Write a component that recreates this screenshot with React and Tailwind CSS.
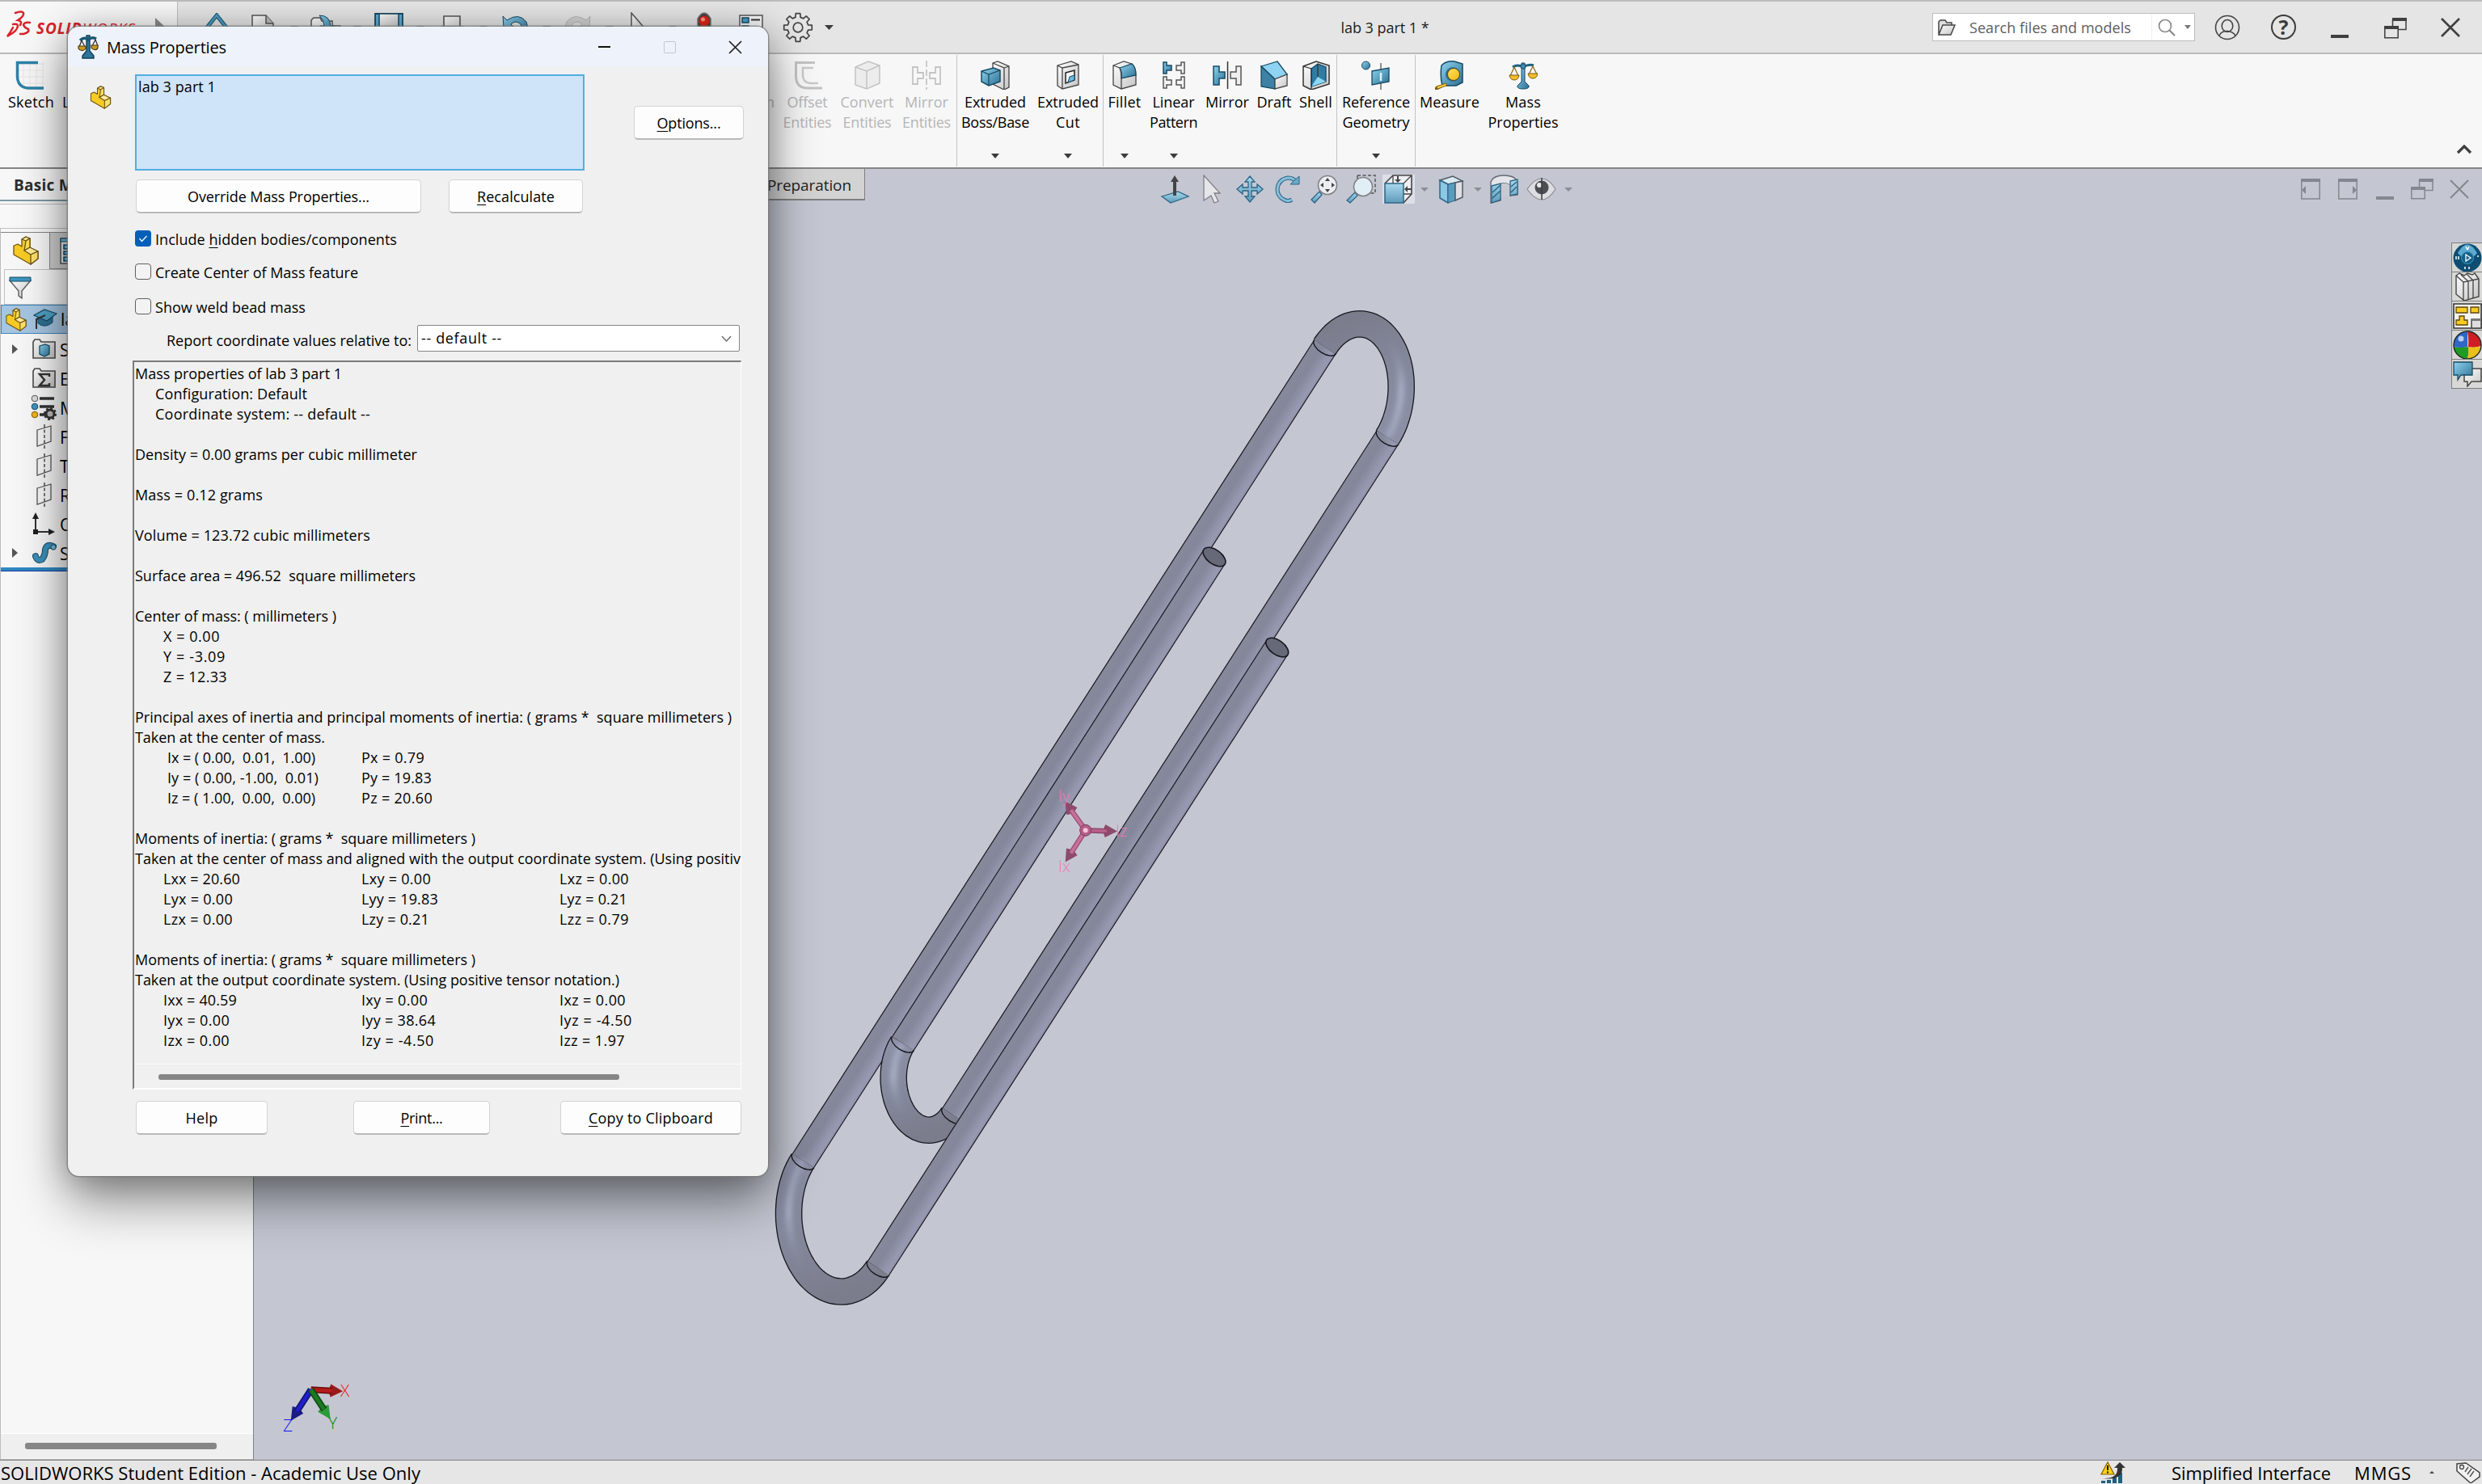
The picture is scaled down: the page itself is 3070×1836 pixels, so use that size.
import React, { useLayoutEffect, useRef } from "react";

/* Text that is tracked so that it takes exactly w pixels. */
function T({ w, className = "", children }) {
  const ref = useRef(null);
  useLayoutEffect(() => {
    const el = ref.current;
    if (!w || !el) return;
    el.style.letterSpacing = "0px";
    const natural = el.getBoundingClientRect().width;
    const n = el.textContent.length;
    el.style.letterSpacing = (w - natural) / n + "px";
  }, [w, children]);
  return (
    <span ref={ref} className={"inline-block whitespace-pre " + className}>
      {children}
    </span>
  );
}

const S = ({ w = 36, h = 36, className = "", children }) => (
  <svg width={w} height={h} viewBox={`0 0 ${w} ${h}`} fill="none" className={"block shrink-0 " + className}>
    {children}
  </svg>
);

const Caret = ({ c = "#3c3c3c", w = 10, h = 6 }) => (
  <S w={w} h={h}>
    <path d={`M0 0H${w}L${w / 2} ${h}Z`} fill={c} />
  </S>
);

function Defs() {
  return (
    <svg width="0" height="0" className="absolute">
      <defs>
        <linearGradient id="gb" x1="0" y1="0" x2="1" y2="1">
          <stop offset="0" stopColor="#8fd3f0" />
          <stop offset="1" stopColor="#2c6f93" />
        </linearGradient>
        <linearGradient id="gl" x1="0" y1="0" x2="0" y2="1">
          <stop offset="0" stopColor="#a9d9ee" />
          <stop offset="1" stopColor="#5f9bba" />
        </linearGradient>
        <linearGradient id="gw" x1="0" y1="0" x2="1" y2="1">
          <stop offset="0" stopColor="#ffffff" />
          <stop offset="1" stopColor="#c4c4c4" />
        </linearGradient>
        <linearGradient id="gy" x1="0" y1="0" x2="1" y2="1">
          <stop offset="0" stopColor="#ffe45c" />
          <stop offset="1" stopColor="#f2b50f" />
        </linearGradient>
      </defs>
    </svg>
  );
}

const DK = "#174a63";

const Part = ({ w = 32, h = 36 }) => (
  <svg width={w} height={h} viewBox="0 0 32 36" fill="none" className="block shrink-0">
    <g stroke="#6d5213" strokeWidth="1.3" strokeLinejoin="round">
      <path d="M1 12L6 10L11 13V4L16 1L21 3V14L24 16L31 19V28L22 35L1 23Z" fill="#f8cb24" />
      <path d="M11 4L16 1L21 3L16 6Z" fill="#fdea9a" />
      <path d="M16 6L21 3V14L14 18Z" fill="#fbdd58" />
      <path d="M14 18L21 14L31 19L22 23Z" fill="#fdea9a" />
      <path d="M22 23L31 19V28L22 35Z" fill="#fbe06a" />
    </g>
  </svg>
);

const Scales = ({ w = 36, h = 36 }) => (
  <svg width={w} height={h} viewBox="0 0 36 36" fill="none" className="block shrink-0">
    <path d="M16 3H20V26L25 31C26 34 22 35 18 35S10 34 11 31L16 26Z" fill="url(#gb)" stroke={DK} />
    <path d="M5 8Q11 4 18 8Q25 4 31 6" stroke="#1f5f80" strokeWidth="3" />
    <circle cx="18" cy="7" r="3.2" fill="#3a8bb0" stroke={DK} />
    <path d="M7 8L2 19H12ZM30 7L25 17H35Z" stroke="#8b6a1b" strokeWidth="1.2" />
    <path d="M1 18H13Q12 24 7 24T1 18ZM24 16H36Q35 22 30 22T24 16Z" fill="#f4bd2a" stroke="#7d5a10" />
  </svg>
);

/* Heavier variant of the balance used in the dialog's title bar. */
const ScalesBold = () => (
  <S w={26} h={30}>
    <path d="M11 1H15V20L20 26V29H6V26L11 20Z" fill="#2f7499" stroke="#123f57" strokeWidth="1.400" />
    <path d="M3 7Q8 2 13 6Q18 2 23 5" stroke="#1c5572" strokeWidth="3.500" />
    <path d="M5 7L2 15M5 7L9 15M22 6L18 14M22 6L25 14" stroke="#333" strokeWidth="1.300" />
    <path d="M1 14H10V17Q8 20 5 19.500T1 17ZM17 13H25V16Q24 19 21 18.500T17 16Z" fill="#c99a24" stroke="#4b3a10" strokeWidth="1.200" />
  </S>
);

const icons = {
  sketch: (
    <S>
      <path d="M2 4H36M2 12H36M2 20H36M2 28H36M10 2V36M18 2V36M26 2V36M34 2V36" stroke="#e6e6e6" />
      <path d="M28 2.500H2.500V20Q3 33 16 34H35" stroke="#2c82a8" strokeWidth="3.500" />
    </S>
  ),
  offset: (
    <S>
      <path d="M27 2.500H3.500V20Q4 34 18 34H36" stroke="#c3c3c3" strokeWidth="3" />
      <path d="M25 9H12V18Q12 27 21 28H31" stroke="#c9c9c9" strokeWidth="2.500" />
    </S>
  ),
  convert: (
    <S>
      <path d="M3 8L19 1L33 6V28L17 35L3 30Z" fill="#ececec" stroke="#c4c4c4" strokeWidth="1.500" />
      <path d="M3 8L17 13L33 6M17 13V35" stroke="#c4c4c4" strokeWidth="1.500" />
    </S>
  ),
  mirrorGray: (
    <S>
      <path d="M18 0V36" stroke="#bdbdbd" strokeWidth="1.500" strokeDasharray="8 3" />
      <path d="M1 8H7V15H14V22H7V29H1ZM35 8H29V15H22V22H29V29H35Z" stroke="#c4c4c4" strokeWidth="1.800" />
    </S>
  ),
  boss: (
    <S>
      <path d="M15 3L21 1L35 7V33L29 36L15 29Z" fill="url(#gw)" stroke="#444" strokeWidth="1.300" />
      <path d="M15 3L29 9V36M29 9L35 7" stroke="#444" strokeWidth="1.300" />
      <path d="M1 13L16 9L24 12V26L10 31L1 26Z" fill="url(#gb)" stroke={DK} strokeWidth="1.500" />
      <path d="M1 13L10 17L24 12M10 17V31" stroke={DK} strokeWidth="1.300" />
    </S>
  ),
  cut: (
    <S>
      <path d="M5 6L22 1L31 5V30L11 35L5 31Z" fill="url(#gw)" stroke="#444" strokeWidth="1.300" />
      <path d="M5 6L11 9L31 5M11 9V35" stroke="#444" strokeWidth="1.300" />
      <path d="M15 15L26 12V24L15 28Z" fill="#f4f4f4" stroke="#222" strokeWidth="1.500" />
      <path d="M20 20L26 18V24L18 27Z" fill="#6cb9dc" stroke={DK} />
    </S>
  ),
  fillet: (
    <S>
      <path d="M4 6L17 1L27 4Q32 8 32 18V30L14 35L4 30Z" fill="url(#gw)" stroke="#444" strokeWidth="1.300" />
      <path d="M12 9L27 4Q32 8 32 18L14 22Q15 14 12 9Z" fill="url(#gb)" stroke={DK} strokeWidth="1.300" />
      <path d="M4 6L12 9Q14 14 14 22V35" stroke="#444" strokeWidth="1.300" />
    </S>
  ),
  linear: (
    <S>
      <path d="M5 2H9V6H15V12H9V16H5Z" fill="url(#gb)" stroke={DK} strokeWidth="1.500" />
      <path d="M31 2H27V6H21V12H27V16H31ZM5 20H9V24H15V30H9V34H5ZM31 20H27V24H21V30H27V34H31Z" fill="#f4f4f4" stroke="#555" strokeWidth="1.500" />
    </S>
  ),
  mirror: (
    <S>
      <path d="M1 7H8V14H15V22H8V30H1Z" fill="url(#gb)" stroke={DK} strokeWidth="1.500" />
      <path d="M35 7H29V14H22V22H29V30H35Z" fill="#eee" stroke="#555" strokeWidth="1.500" />
      <path d="M18.500 1V35" stroke="#333" strokeWidth="1.500" />
    </S>
  ),
  draft: (
    <S>
      <path d="M2 7L22 1L34 17L19 23Z" fill="#8fd3f2" stroke={DK} strokeWidth="1.300" />
      <path d="M2 7L19 23V35L2 32Z" fill="#3d82a6" stroke={DK} strokeWidth="1.300" />
      <path d="M19 23L34 17V31L19 35Z" fill="url(#gw)" stroke="#444" strokeWidth="1.300" />
    </S>
  ),
  shell: (
    <S>
      <path d="M2 7L18 1L34 6V29L12 36L2 31Z" fill="url(#gw)" stroke="#333" strokeWidth="1.500" />
      <path d="M12 10L20 4L30 8V26L12 32Z" fill="#2f7ca3" stroke={DK} strokeWidth="1.300" />
      <path d="M12 32L20 20L30 26Z" fill="#8bd7f5" />
      <path d="M20 4V20M2 7L12 10V36" stroke="#333" strokeWidth="1.300" />
    </S>
  ),
  refgeo: (
    <S>
      <circle cx="5.500" cy="6" r="5" fill="url(#gb)" stroke={DK} />
      <path d="M24 3V36" stroke="#555" strokeWidth="1.300" />
      <path d="M13 13L34 9V26L13 30Z" fill="url(#gb)" stroke={DK} strokeWidth="1.300" />
      <path d="M24 15V25" stroke="#dff3fb" strokeWidth="2.500" />
    </S>
  ),
  measure: (
    <S>
      <path d="M8 6Q14 0 24 1L34 4V27L26 31H9Q6 20 8 6Z" fill="url(#gb)" stroke={DK} strokeWidth="1.500" />
      <circle cx="22" cy="17" r="9" fill="#2c6f93" />
      <circle cx="23" cy="17" r="7.500" fill="url(#gy)" stroke="#5c4a10" />
      <path d="M1 33V36L13 30M1 33L13 29" stroke="#7d5a10" strokeWidth="2" />
      <path d="M2 32L14 28V31L3 35Z" fill="#f7cf3a" stroke="#7d5a10" strokeWidth="0.800" />
    </S>
  ),
  mass: <Scales />,
};

const GRAY = "text-[#b5b5b5]";
const ribbon = [
  { i: "offset", l: [["Offset", 50], ["Entities", 60]], b: "w-[75px]", g: 1 },
  { i: "convert", l: [["Convert", 66], ["Entities", 60]], b: "w-[73px]", g: 1 },
  { i: "mirrorGray", l: [["Mirror", 54], ["Entities", 60]], b: "w-[74px]", g: 1 },
  0,
  { i: "boss", l: [["Extruded", 76], ["Boss/Base", 84]], b: "w-[94px]", c: 1 },
  { i: "cut", l: [["Extruded", 76], ["Cut", 30]], b: "w-[86px]", c: 1 },
  0,
  { i: "fillet", l: [["Fillet", 41]], b: "w-[52px]", c: 1 },
  { i: "linear", l: [["Linear", 52], ["Pattern", 59]], b: "w-[69px]", c: 1 },
  { i: "mirror", l: [["Mirror", 54]], b: "w-[64px]" },
  { i: "draft", l: [["Draft", 43]], b: "w-[52px]" },
  { i: "shell", l: [["Shell", 41]], b: "w-[51px]" },
  0,
  { i: "refgeo", l: [["Reference", 84], ["Geometry", 83]], b: "w-[96px]", c: 1 },
  0,
  { i: "measure", l: [["Measure", 74]], b: "w-[84px]" },
  { i: "mass", l: [["Mass", 44], ["Properties", 87]], b: "w-[98px]" },
];

function RibbonItem({ d }) {
  return (
    <div className={"flex h-full shrink-0 flex-col items-center pt-[8px] pb-[11px] " + d.b + " " + (d.g ? GRAY : "text-black")}>
      {icons[d.i]}
      <div className="mt-[3px] flex flex-col items-center text-[18px] leading-[25px]">
        {d.l.map(([t, w], k) => (
          <T key={k} w={w}>{t}</T>
        ))}
      </div>
      {d.c ? (
        <div className="mt-auto">
          <Caret w={10} h={6} />
        </div>
      ) : null}
    </div>
  );
}

function Gear({ size, teeth = 8, ro, ri, rh, stroke = "#444", fill = "none" }) {
  const c = size / 2;
  const pts = [];
  for (let k = 0; k < teeth; k++) {
    const a = (k / teeth) * Math.PI * 2;
    for (const [da, r] of [[-0.24, ri], [-0.16, ro], [0.16, ro], [0.24, ri]]) {
      pts.push(`${(c + r * Math.sin(a + da)).toFixed(2)},${(c - r * Math.cos(a + da)).toFixed(2)}`);
    }
  }
  return (
    <S w={size} h={size}>
      <polygon points={pts.join(" ")} fill={fill} stroke={stroke} strokeWidth="1.7" strokeLinejoin="round" />
      <circle cx={c} cy={c} r={rh} stroke={stroke} strokeWidth="1.7" fill="#e6e6e6" />
    </S>
  );
}

const Restore = ({ c }) => (
  <S w={28} h={26}>
    <path d="M10 2.500H27V14.500H17M10.500 2V10" stroke={c} strokeWidth="1.500" />
    <path d="M10 0H28V4H10ZM0 10H18V14H0Z" fill={c} />
    <path d="M0.800 11H17.200V24.800H0.800Z" stroke={c} strokeWidth="1.500" />
  </S>
);
const Cross = ({ c, sw = 2.6 }) => (
  <S w={24} h={24}>
    <path d="M1 1L23 23M23 1L1 23" stroke={c} strokeWidth={sw} />
  </S>
);

const Cell = ({ children, className = "" }) => (
  <div className={"flex h-[40px] w-[39px] shrink-0 items-start justify-center " + className}>{children}</div>
);
const QC = () => (
  <Cell className="pt-[17px]">
    <Caret w={10} h={6} c="#555" />
  </Cell>
);

function Header() {
  return (
    <div className="flex h-[67px] shrink-0 border-t-2 border-b-2 border-t-[#bcbcbc] border-b-[#bababa] bg-[#e5e5e5]">
      <div className="flex w-[220px] shrink-0 border-r border-[#bdbdbd] bg-[#f7f7f7] pt-[10px] pl-[7px]">
        <S w={34} h={36}>
          <g stroke="#d8232a" strokeWidth="2.500" strokeLinecap="round">
            <path d="M12 4Q20 1 22 4Q23 8 15 13Q21 14 18 19" />
            <path d="M9 18Q15 17 15 20Q15 26 2 33Q6 28 9 22" />
            <path d="M30 16Q23 15 22 19Q24 23 28 24Q30 28 22 30H18" />
          </g>
        </S>
        <div className="mt-[9px] ml-[4px] flex h-[28px] items-center text-[19px] leading-[26px] text-[#d8232a] italic">
          <T w={57} className="font-bold">SOLID</T>
          <T w={66}>WORKS</T>
        </div>
        <S w={14} h={26} className="mt-[10px] ml-[24px]">
          <path d="M0 0L14 13L0 26Z" fill="#8a8a8a" />
        </S>
      </div>
      <div className="flex pt-[13px]">
        <Cell className="ml-[28px]">
          <S w={36} h={30} className="mt-[1px]">
            <path d="M18 3L2 23H9V30H27V23H34Z" stroke="#245f7d" strokeWidth="5" />
            <path d="M18 3L2 23H9V30H27V23H34Z" stroke="#4c9dc2" strokeWidth="2.500" />
          </S>
        </Cell>
        <Cell className="ml-[18px]">
          <S w={28} h={34} className="mt-[3px]">
            <path d="M1 1H18L27 11V33H1Z" fill="url(#gw)" stroke="#555" strokeWidth="1.500" />
            <path d="M18 1V11H27" fill="#bbb" stroke="#555" strokeWidth="1.500" />
          </S>
        </Cell>
        <QC />
        <Cell>
          <S w={38} h={34} className="mt-[3px]">
            <path d="M1 33V7L4 4H12L14 8H27V14H37V33Z" fill="url(#gw)" stroke="#555" strokeWidth="1.500" />
            <path d="M11 1Q24 1 25 14H30L21 24L12 14H17Q17 7 11 1Z" fill="url(#gb)" stroke={DK} />
          </S>
        </Cell>
        <QC />
        <Cell>
          <S w={36} h={34}>
            <path d="M1 2H35V34H1Z" fill="#5fabd0" stroke={DK} strokeWidth="1.800" />
            <path d="M6 2H30V21H6Z" fill="url(#gw)" stroke={DK} strokeWidth="1.500" />
          </S>
        </Cell>
        <QC />
        <Cell>
          <S w={28} h={30} className="mt-[4px]">
            <path d="M4 14V1H24V14M0 14H28V30H0Z" fill="url(#gw)" stroke="#555" strokeWidth="1.600" />
          </S>
        </Cell>
        <QC />
        <Cell>
          <S w={34} h={34} className="mt-[3px]">
            <path d="M2 2L3 16H16L12 12Q18 6 24 12Q28 18 22 30Q36 18 31 9Q22 -3 7 7Z" fill="url(#gb)" stroke={DK} />
          </S>
        </Cell>
        <QC />
        <Cell>
          <S w={34} h={34} className="mt-[3px]">
            <path d="M32 2L31 16H18L22 12Q16 6 10 12Q6 18 12 30Q-2 18 3 9Q12 -3 27 7Z" fill="#d0d0d0" stroke="#b5b5b5" />
          </S>
        </Cell>
        <QC />
        <Cell>
          <S w={22} h={34} className="mr-[4px]">
            <path d="M1 1L20 23H10L1 32Z" fill="url(#gw)" stroke="#555" strokeWidth="1.500" />
          </S>
        </Cell>
        <QC />
        <Cell>
          <S w={20} h={34}>
            <path d="M2 8Q10 -6 18 8V34H2Z" fill="#444" stroke="#777" strokeWidth="1.500" />
            <circle cx="10" cy="11" r="6.500" fill="#e02418" />
            <circle cx="8.500" cy="9" r="2.500" fill="#f99b8e" />
          </S>
        </Cell>
        <Cell className="ml-[19px]">
          <S w={30} h={34} className="mt-[3px]">
            <path d="M1 1H29V33H1Z" fill="#f4f4f4" stroke="#555" strokeWidth="1.500" />
            <path d="M4 4H12V10H4ZM4 14H12V21H4Z" fill="#4b9cc0" stroke={DK} strokeWidth="1.500" />
            <path d="M15 6.500H26M15 17H26" stroke="#333" strokeWidth="2" />
          </S>
        </Cell>
        <Cell className="ml-[19px]">
          <Gear size={38} ro={17.5} ri={13} rh={5.8} />
        </Cell>
        <Cell className="pt-[16px]">
          <Caret w={11} h={6} c="#3c3c3c" />
        </Cell>
      </div>
      <div className="flex flex-1 items-center justify-center pt-[1px] pr-[9px] text-[18px] leading-[25px] text-[#1c1c1c]">
        <T w={109}>lab 3 part 1 *</T>
      </div>
      <div className="flex items-center">
        <div className="flex h-[35px] w-[325px] items-center border border-[#bdbdbd] bg-white">
          <S w={22} h={20} className="ml-[6px]">
            <path d="M1 18V3L3 1H9L11 4H17V7" fill="#ddd" stroke="#444" strokeWidth="1.500" />
            <path d="M1 19L6 7H21L16 19Z" fill="url(#gw)" stroke="#444" strokeWidth="1.500" />
          </S>
          <T w={200} className="ml-[17px] pt-[1px] text-[18px] leading-[25px] text-[#5e5e5e]">Search files and models</T>
          <div className="ml-[25px] h-[32px] border-l border-[#efefef]" />
          <S w={22} h={22} className="ml-[7px]">
            <circle cx="9" cy="9" r="7.500" stroke="#8a8a8a" strokeWidth="1.700" />
            <path d="M14 14L21 21" stroke="#8a8a8a" strokeWidth="2.200" />
          </S>
          <div className="ml-[11px]">
            <Caret w={8} h={5} c="#777" />
          </div>
        </div>
        <S w={32} h={32} className="ml-[24px]">
          <circle cx="16" cy="16" r="14.500" stroke="#444" strokeWidth="1.600" />
          <ellipse cx="16" cy="14" rx="6.800" ry="7.500" stroke="#444" strokeWidth="1.600" />
          <path d="M6 26Q9 20 16 20.500T26 26" stroke="#444" strokeWidth="1.600" />
        </S>
        <div className="ml-[38px] flex h-[31px] w-[31px] items-center justify-center rounded-full border-2 border-[#3c3c3c] text-[25px] leading-[25px] font-bold text-[#3c3c3c]">
          ?
        </div>
        <div className="mt-[23px] ml-[43px] h-[4px] w-[22px] bg-[#3f3f3f]" />
        <div className="mt-[2px] ml-[44px]"><Restore c="#3f3f3f" /></div>
        <div className="mt-[1px] mr-[27px] ml-[42px]"><Cross c="#3f3f3f" /></div>
      </div>
    </div>
  );
}

const treeIcon = {
  folder: (inner) => (
    <S w={30} h={26}>
      <path d="M1 24V4L3 1H9L11 4H28V24Z" fill="url(#gw)" stroke="#4a4a4a" strokeWidth="1.600" />
      {inner}
    </S>
  ),
  plane: (
    <S w={20} h={30} className="ml-[5px]">
      <path d="M1 7L18 2V21L1 27Z" stroke="#555" strokeWidth="1.300" />
      <path d="M10 0V30" stroke="#333" strokeWidth="1.300" strokeDasharray="4 2.500" />
    </S>
  ),
};

const tree = [
  { a: 1, t: "S", i: treeIcon.folder(<path d="M9 9L16 7L21 9V19L15 22L9 19Z" fill="url(#gb)" stroke={DK} strokeWidth="1.300" />) },
  { t: "E", i: treeIcon.folder(<path d="M21 11V8H9L15 15L9 22H21V19" stroke="#333" strokeWidth="2.500" />) },
  {
    t: "M",
    i: (
      <S w={34} h={32} className="-ml-[2px]">
        <path d="M11 5H29M11 15H29M11 25H18" stroke="#333" strokeWidth="3.500" />
        <circle cx="5" cy="5" r="3.800" fill="#ddd" stroke="#555" />
        <circle cx="5" cy="15" r="3.800" fill="#3f95bf" stroke={DK} />
        <circle cx="5" cy="25" r="3.800" fill="#f0b81c" stroke="#7d5a10" />
        <circle cx="24" cy="24" r="5" stroke="#333" strokeWidth="3" fill="#bbb" />
        <circle cx="24" cy="24" r="6.800" stroke="#333" strokeWidth="2.500" strokeDasharray="2.700 2.640" />
      </S>
    ),
  },
  { t: "F", i: treeIcon.plane },
  { t: "T", i: treeIcon.plane },
  { t: "R", i: treeIcon.plane },
  {
    t: "O",
    i: (
      <S w={30} h={28}>
        <path d="M4 24V6M4 24H24" stroke="#333" strokeWidth="2" />
        <path d="M4 0L8 8H0ZM28 24L20 20V28ZM1 21H7V27H1Z" fill="#222" />
      </S>
    ),
  },
  {
    a: 1,
    t: "S",
    i: (
      <S w={30} h={30}>
        <path d="M4 19Q6 26 12 23Q16 18 16 11Q18 3 26 7" stroke={DK} strokeWidth="8" strokeLinecap="round" />
        <path d="M4 19Q6 26 12 23Q16 18 16 11Q18 3 26 7" stroke="#3b8fb8" strokeWidth="6" strokeLinecap="round" />
        <circle cx="26" cy="8" r="3.200" fill="#6fb9da" stroke={DK} />
      </S>
    ),
  },
];

function LeftPanel() {
  return (
    <div className="flex w-[314px] shrink-0 flex-col border-r border-[#7f8288] bg-[#f7f7f7]">
      <div className="flex h-[40px] shrink-0 items-center border-b-2 border-[#7e9aa3] pt-[2px] pl-[17px] text-[19px] leading-[25px] font-bold text-[#2e2e2e]">
        <T w={74}>Basic M</T>
      </div>
      <div className="mt-[3px] h-[31px] shrink-0 border-t border-b border-[#c0c0c0] bg-[#f8f8f8]" />
      <div className="flex min-h-0 flex-1 flex-col border-l border-[#bdbdbd]">
        <div className="mt-[4px] flex h-[46px] shrink-0 border-t border-[#858585]">
          <div className="w-[60px] pt-[4px] pl-[15px]">
            <Part w={32} h={36} />
          </div>
          <div className="flex-1 border-b border-l border-[#858585] bg-[#cfcfcf] pt-[6px] pl-[12px]">
            <S w={30} h={34}>
              <path d="M1 1H29V32H1Z" fill="#eee" stroke="#555" strokeWidth="1.500" />
              <path d="M1 1H29V5H1Z" fill="#6cb9dc" stroke={DK} />
              <path d="M5 9H12V14H5ZM5 17H12V21H5ZM5 24H12V29H5Z" fill="#6cb9dc" stroke={DK} strokeWidth="1.500" />
            </S>
          </div>
        </div>
        <div className="ml-[4px] h-[44px] shrink-0 border border-[#c2c2c2] pt-[8px] pl-[5px]">
          <S w={28} h={28}>
            <path d="M1 5H27L16 18V27L12 24V18Z" fill="url(#gw)" stroke="#555" strokeWidth="1.300" />
            <path d="M1 1H27V6H1Z" fill="#3f95bf" stroke={DK} />
          </S>
        </div>
        <div className="flex h-[36px] shrink-0 items-center border border-[#3f86bb] bg-[#a5c5e1] pl-[5px]">
          <Part w={26} h={29} />
          <S w={30} h={26} className="ml-[8px]">
            <path d="M6 10V18Q14 25 24 17V9" fill="#2f6f92" stroke={DK} />
            <path d="M1 8L14 1L29 6L17 15Z" fill="#4f9fc4" stroke={DK} strokeWidth="1.300" />
            <path d="M15 8L4 13V25" stroke="#333" strokeWidth="2" />
          </S>
          <span className="ml-[4px] text-[21px] leading-[30px]">la</span>
        </div>
        <div className="flex flex-col pt-[1px]">
          {tree.map((r, k) => (
            <div key={k} className="flex h-[36px] shrink-0 items-center pl-[14px]">
              <div className="w-[25px]">
                {r.a ? (
                  <S w={7} h={12}>
                    <path d="M0 0L7 6L0 12Z" fill="#555" />
                  </S>
                ) : null}
              </div>
              <div className="flex w-[34px] items-center">{r.i}</div>
              <span className="pt-[1px] text-[21px] leading-[30px] text-black">{r.t}</span>
            </div>
          ))}
        </div>
        <div className="h-[5px] shrink-0 border-b border-[#1c3c9c] bg-[#2f87c2]" />
        <div className="flex-1" />
        <div className="h-[31px] shrink-0 border-t border-white bg-[#efefef] pt-[11px] pl-[30px]">
          <div className="h-[8px] w-[237px] rounded-[3px] bg-[#868686]" />
        </div>
        <div className="mt-[1px] h-[1px] shrink-0 bg-[#b9b9b9]" />
      </div>
    </div>
  );
}

const ST = "#2c6484";
function HudBar() {
  const cc = "#8d8f96";
  return (
    <div className="flex h-[44px] shrink-0 items-start">
      <div className="flex h-[39px] w-[756px] shrink-0 items-center justify-end border-r border-b-2 border-[#7f7f7f] bg-[#d3d3d3] pt-[3px] pr-[16px] text-[19px] leading-[25px] text-[#1f1f1f]">
        <T w={104}>Preparation</T>
      </div>
      <div className="flex items-center pt-[7px] pl-[365px]">
        <S w={38}>
          <path d="M2 27L22 21L35 27L13 35Z" fill="url(#gl)" stroke={ST} strokeWidth="1.300" />
          <path d="M18 26V9" stroke="#444" strokeWidth="4" />
          <path d="M18 1L23 9H13Z" fill="#444" />
        </S>
        <S w={24} className="ml-[14px]">
          <path d="M2 1L22 23H15L20 33L15 35L11 26L2 32Z" fill="#e6e6ea" stroke="#808086" strokeWidth="1.300" />
        </S>
        <S w={34} className="ml-[18px]">
          <path d="M17 2L23 9H19V16H26V12L33 18L26 24V20H19V27H23L17 34L11 27H15V20H8V24L1 18L8 12V16H15V9H11Z" fill="url(#gl)" stroke={ST} strokeWidth="1.300" />
        </S>
        <S w={32} className="ml-[13px]">
          <path d="M22 31Q17 34 12 31Q4 27 4 18Q5 6 17 4Q24 4 27 9" stroke={ST} strokeWidth="5" />
          <path d="M22 31Q17 34 12 31Q4 27 4 18Q5 6 17 4Q24 4 27 9" stroke="#86bfdb" strokeWidth="3" />
          <path d="M31 2V12H20L24 8Z" fill="#6ba9c8" stroke={ST} />
        </S>
        <S w={36} className="ml-[12px]">
          <path d="M12 21L2 31L6 35L15 25Z" fill="url(#gl)" stroke={ST} strokeWidth="1.300" />
          <circle cx="22" cy="13" r="11.500" fill="#eceef2" stroke="#808086" strokeWidth="1.600" />
          <path d="M22 4L25 8H19ZM22 22L25 18H19ZM13 13L17 10V16ZM31 13L27 10V16Z" fill="#444" />
        </S>
        <S w={38} className="ml-[9px]">
          <path d="M14 1H36V23H28M14 1V6" stroke="#555" strokeWidth="1.500" strokeDasharray="4 2.500" />
          <path d="M11 22L1 32L5 35L14 26Z" fill="url(#gl)" stroke={ST} strokeWidth="1.300" />
          <circle cx="21" cy="15" r="11.500" fill="#e2eef5" stroke="#808086" strokeWidth="1.600" />
        </S>
        <S w={40} className="ml-[7px] bg-[#dcdfe6]">
          <path d="M3 11L13 1H36V24L26 35" fill="#eef0f3" stroke="#444" strokeWidth="1.600" />
          <path d="M26 11L36 1M13 1V11M26 24H36" stroke="#444" strokeWidth="1.300" />
          <path d="M3 11H26V35H3Z" fill="url(#gl)" stroke={ST} strokeWidth="1.500" />
          <path d="M19 2V9M36 18H28" stroke="#444" strokeWidth="2" />
          <path d="M15 6H23L19 10ZM31 14V22L27 18Z" fill="#444" />
        </S>
        <div className="ml-[7px]"><Caret c={cc} w={10} h={5} /></div>
        <S w={32} className="ml-[12px]">
          <path d="M2 7L18 2L30 8L12 12Z" fill="#d9e9f1" stroke="#505a64" strokeWidth="1.500" />
          <path d="M2 7L12 12V35L2 29Z" fill="#8cc8e4" stroke={ST} strokeWidth="1.500" />
          <path d="M12 12L21 10V32L12 35Z" fill="#5a9cbf" stroke={ST} />
          <path d="M21 10L30 8V28L21 32Z" fill="#dedfe4" stroke="#505a64" strokeWidth="1.500" />
        </S>
        <div className="ml-[12px]"><Caret c={cc} w={10} h={5} /></div>
        <S w={38} className="ml-[8px]">
          <path d="M3 9Q6 1 19 1T36 8V25L27 26V13Q19 9 15 12V32L3 35Z" fill="#e4e5ea" stroke="#666b74" strokeWidth="1.400" />
          <path d="M15 12Q20 9 27 13V26H22Q18 27 15 29Z" fill="#c8cad2" />
          <path d="M4 14L15 11V31L4 35ZM27 8L36 6V24L27 26Z" fill="url(#gl)" stroke={ST} strokeWidth="1.300" />
          <path d="M5 22L15 13M5 29L15 20M28 15L35 9M28 22L35 15" stroke={ST} strokeWidth="1.500" />
        </S>
        <S w={38} className="ml-[9px]">
          <path d="M1 18Q10 5 19 5T36 18Q28 31 19 31T1 18Z" fill="#dcdde1" stroke="#8a8c92" strokeWidth="1.200" />
          <circle cx="19" cy="16" r="8.500" fill="#4c4e54" />
          <circle cx="16" cy="13" r="3" fill="#e8e8ea" />
          <path d="M19 4V31" stroke="#3c3c3c" strokeWidth="1.500" />
        </S>
        <div className="ml-[9px]"><Caret c={cc} w={10} h={5} /></div>
      </div>
      <div className="ml-auto flex items-center pt-[12px]">
        <S w={24} h={26}>
          <path d="M0.800 1H23.200V25H0.800Z" stroke="#84878f" strokeWidth="1.500" />
          <path d="M0 0H24V4H0ZM1 14L6 9V19Z" fill="#84878f" />
        </S>
        <S w={24} h={26} className="ml-[22px]">
          <path d="M0.800 1H23.200V25H0.800Z" stroke="#84878f" strokeWidth="1.500" />
          <path d="M0 0H24V4H0ZM23 14L18 9V19Z" fill="#84878f" />
        </S>
        <div className="mt-[22px] ml-[23px] h-[4px] w-[22px] bg-[#84878f]" />
        <div className="ml-[21px]"><Restore c="#84878f" /></div>
        <div className="mr-[16px] ml-[20px]"><Cross c="#84878f" sw={2} /></div>
      </div>
    </div>
  );
}

/* ---- Model geometry ---- */
const DX = 0.5397, DY = -0.8419;
const arc = (c, u, v) => {
  const p = [];
  for (let k = 0; k <= 48; k++) {
    const t = (k / 48) * Math.PI;
    p.push(
      `${(c[0] - u[0] * Math.cos(t) + v[0] * Math.sin(t)).toFixed(1)} ${(c[1] - u[1] * Math.cos(t) + v[1] * Math.sin(t)).toFixed(1)}`
    );
  }
  return "M" + p.join("L");
};

function Rod({ a, b, id }) {
  const nx = 16 * -DY, ny = 16 * DX;
  const d = `M${a[0]} ${a[1]}L${b[0]} ${b[1]}`;
  return (
    <g>
      <linearGradient id={id} gradientUnits="userSpaceOnUse" x1={a[0] - nx} y1={a[1] - ny} x2={a[0] + nx} y2={a[1] + ny}>
        <stop offset="0" stopColor="#878a9c" />
        <stop offset="0.4" stopColor="#84879a" />
        <stop offset="0.62" stopColor="#8d90a5" />
        <stop offset="0.85" stopColor="#9699b1" />
        <stop offset="1" stopColor="#9093a9" />
      </linearGradient>
      <path d={d} stroke="#17181d" strokeWidth="32.6" />
      <path d={d} stroke={`url(#${id})`} strokeWidth="30.2" />
    </g>
  );
}

function Bend({ c, u, v, id, gx }) {
  const d = arc(c, u, v);
  return (
    <g>
      <linearGradient id={id} gradientUnits="userSpaceOnUse" x1={gx[0]} y1={gx[1]} x2={gx[2]} y2={gx[3]}>
        <stop offset="0" stopColor="#8d90a6" />
        <stop offset="0.45" stopColor="#868a9e" />
        <stop offset="1" stopColor="#7b7d8d" />
      </linearGradient>
      <linearGradient id={id + "h"} gradientUnits="userSpaceOnUse" x1={gx[0]} y1={gx[1]} x2={gx[2]} y2={gx[3]}>
        <stop offset="0" stopColor="#aeb3cc" stopOpacity="0.6" />
        <stop offset="0.35" stopColor="#aeb3cc" stopOpacity="1" />
        <stop offset="0.6" stopColor="#a2a6bf" stopOpacity="0.2" />
        <stop offset="0.75" stopColor="#a2a6bf" stopOpacity="0" />
      </linearGradient>
      <path d={d} stroke="#17181d" strokeWidth="33.6" />
      <path d={d} stroke={`url(#${id})`} strokeWidth="31" />
      <path d={d} stroke={`url(#${id}h)`} strokeWidth="7" filter="url(#soft)" />
    </g>
  );
}

const Joint = ({ p }) => (
  <path d={`M${p[0] - 13.5} ${p[1] - 8.6}A16 8.5 32.7 0 0 ${p[0] + 13.5} ${p[1] + 8.6}`} stroke="#17181d" strokeWidth="1.4" />
);
const CapEnd = ({ p }) => (
  <ellipse cx={p[0]} cy={p[1]} rx="16" ry="8.8" transform={`rotate(36 ${p[0]} ${p[1]})`} fill="#666978" stroke="#17181d" strokeWidth="1.6" />
);

function Arrow({ x, y, tx, ty, s, cone, shaft, dark, hw = 8, hl = 15 }) {
  const L = Math.hypot(tx - x, ty - y);
  const ux = (tx - x) / L, uy = (ty - y) / L;
  const bx = tx - ux * hl, by = ty - uy * hl;
  return (
    <g>
      <path
        d={`M${tx} ${ty}L${bx - uy * hw} ${by + ux * hw}Q${bx - ux * 4} ${by - uy * 4} ${bx + uy * hw} ${by - ux * hw}Z`}
        fill={cone}
      />
      <path d={`M${x} ${y}L${bx + ux * 2} ${by + uy * 2}`} stroke={dark} strokeWidth={s} />
      <path d={`M${x} ${y}L${bx + ux * 2} ${by + uy * 2}`} stroke={shaft} strokeWidth={s * 0.6} />
    </g>
  );
}

const J = {
  a: [993.5, 1436], b: [1639, 429], c: [1716.5, 541], d: [1179, 1379.5],
  e: [1117, 1291], f: [1502, 689], g: [1579.7, 801], h: [1086.5, 1569],
};

function Model() {
  return (
    <svg width="2756" height="1597" viewBox="314 209 2756 1597" fill="none" className="absolute inset-0">
      <filter id="soft" x="-20%" y="-20%" width="140%" height="140%">
        <feGaussianBlur stdDeviation="3" />
      </filter>
      <Rod a={J.a} b={J.b} id="r1" />
      <Rod a={J.d} b={J.c} id="r2" />
      <Bend c={[1677.3, 485]} u={[38.75, 56]} v={[40.3, -62.9]} id="b1" gx={[1728, 545, 1670, 395]} />
      <Joint p={J.b} />
      <Joint p={J.c} />
      <Bend c={[1147.5, 1335.2]} u={[31, 44.3]} v={[-28.8, 44.8]} id="b2" gx={[1110, 1285, 1150, 1400]} />
      <Rod a={J.e} b={J.f} id="r3" />
      <Joint p={J.e} />
      <Joint p={J.d} />
      <CapEnd p={J.f} />
      <Bend c={[1039.5, 1502.5]} u={[46.5, 66.5]} v={[-43.9, 68.5]} id="b3" gx={[985, 1430, 1040, 1600]} />
      <Rod a={J.h} b={J.g} id="r4" />
      <Joint p={J.a} />
      <Joint p={J.h} />
      <CapEnd p={J.g} />

      <Arrow x={1342.7} y={1027.2} tx={1317.2} ty={991.5} s={6.5} cone="#8d4a6b" shaft="#c7709b" dark="#9b4d73" />
      <Arrow x={1342.7} y={1027.2} tx={1382} ty={1028.6} s={6.5} cone="#8d4a6b" shaft="#b7618b" dark="#8a4266" />
      <Arrow x={1342.7} y={1027.2} tx={1317.7} ty={1066.5} s={6.5} cone="#8d4a6b" shaft="#c7709b" dark="#9b4d73" />
      <circle cx="1342.700" cy="1027.200" r="7" fill="#b45d87" stroke="#7d3b5b" />
      <circle cx="1342.700" cy="1027.200" r="3" fill="#f3c3da" />
      <g className="fill-[#f07ab5] text-[20px] font-light">
        <text x="1309" y="992">Iy</text>
        <text x="1380" y="1035">Iz</text>
        <text x="1309" y="1079">Ix</text>
      </g>

      <Arrow x={384.6} y={1719.3} tx={424} ty={1721.3} s={8} cone="#9c1a1a" shaft="#b51a1a" dark="#6e1010" hl={15} />
      <Arrow x={384.6} y={1719.3} tx={359.7} ty={1757.7} s={8} cone="#1b1b86" shaft="#1f1fce" dark="#14146a" hl={16} />
      <Arrow x={384.6} y={1719.3} tx={408.7} ty={1755.7} s={8} cone="#2f9a3a" shaft="#1c7a22" dark="#0e4a12" hl={16} />
      <g className="text-[21px] font-light">
        <text x="421" y="1728" className="fill-[#f01818]">X</text>
        <text x="406" y="1768" className="fill-[#0b8a14]">Y</text>
        <text x="350" y="1771" className="fill-[#1414f0]">Z</text>
      </g>
    </svg>
  );
}

function TaskPane() {
  const cell = "flex h-[36px] items-center justify-center border-b border-[#7d7d7d] bg-[#d8d8d6] overflow-hidden";
  return (
    <div className="absolute top-[91px] right-0 w-[38px] border-t border-l border-[#7d7d7d]">
      <div className={cell}>
        <S w={36} h={36}>
          <circle cx="18" cy="18" r="17.500" fill="#0d4d73" />
          <path d="M6 12Q18 -9 30 12Q26 18 18 18T6 12Z" fill="#5ea9cf" />
          <circle cx="18" cy="18" r="7.500" fill="#14608c" stroke="#3f93bd" />
          <path d="M16 14L22 18L16 22Z" stroke="#fff" strokeWidth="1.300" />
          <path d="M16 4L18 8M20 4L18 8M4 16V20M7 16V20M30 16H32M15 29V32M20 29V32" stroke="#fff" strokeWidth="1.500" />
        </S>
      </div>
      <div className={cell}>
        <S w={32} h={36}>
          <path d="M2 4L6 1L12 4L16 1L22 3L25 1L30 8V30L12 35L2 27Z" fill="url(#gw)" stroke="#444" strokeWidth="1.400" />
          <path d="M2 4L11 12V35M11 12L30 8M17 11V33M23 10V32M8 3L17 11M15 2L23 10" stroke="#444" strokeWidth="1.300" />
        </S>
      </div>
      <div className={cell}>
        <S w={36} h={32}>
          <path d="M1 1H35V31H1Z" fill="#f4f4f0" stroke="#333" strokeWidth="1.600" />
          <path d="M4 5H18V12H4ZM22 5H32V12H22ZM4 27V21H8V16H14V21H18V27Z" fill="#f8cb20" stroke="#5c4410" strokeWidth="1.300" />
          <path d="M23 20H35V31H23Z" fill="#ddd" stroke="#444" strokeWidth="1.500" />
          <path d="M23 19H35V22H23Z" fill="#777" />
        </S>
      </div>
      <div className={cell}>
        <S w={36} h={36}>
          <path d="M18 18V1A17 17 0 0 0 1 20Q9 22 18 20Z" fill="#2f66c8" />
          <path d="M18 1A17 17 0 0 1 35 19Q26 22 19 20Q20 10 18 1Z" fill="#cf1d22" />
          <path d="M1 20A17 17 0 0 0 18 35Q20 28 19 20Q9 22 1 20Z" fill="#1f9a24" />
          <path d="M35 19A17 17 0 0 1 18 35Q20 28 19 20Q27 22 35 19Z" fill="#e9c01a" />
          <circle cx="18" cy="18" r="17" stroke="#222" strokeWidth="1.300" />
          <circle cx="10" cy="10" r="3.500" fill="#b9cff2" />
        </S>
      </div>
      <div className={cell}>
        <S w={36} h={32}>
          <path d="M14 9H35V25H23L18 31V25H14Z" fill="url(#gw)" stroke="#444" strokeWidth="1.500" />
          <path d="M1 1H24V17H10L6 23V17H1Z" fill="url(#gb)" stroke={DK} strokeWidth="1.300" />
        </S>
      </div>
    </div>
  );
}

/* ---- Dialog ---- */
const Btn = ({ className, w, children }) => (
  <button
    className={
      "flex h-[42px] shrink-0 items-center justify-center rounded-[5px] border border-b-2 border-[#d3d3d3] border-b-[#b9b9b9] bg-[#fdfdfd] pt-[2px] text-[18px] leading-[25px] text-black " +
      className
    }
  >
    <T w={w}>{children}</T>
  </button>
);

const U = ({ children }) => <span className="underline decoration-1 underline-offset-3">{children}</span>;

const Check = ({ on, w, children, className }) => (
  <label className={"ml-[83px] flex h-[20px] items-center " + className}>
    <span
      className={
        "flex h-[20px] w-[20px] shrink-0 items-center justify-center rounded-[4px] " +
        (on ? "bg-[#005fb8]" : "border border-[#5f5f5f] bg-[#f3f3f3]")
      }
    >
      {on ? (
        <S w={12} h={10}>
          <path d="M1.500 5L4.500 8.500L10.500 2" stroke="#fff" strokeWidth="1.200" />
        </S>
      ) : null}
    </span>
    <T w={w} className="ml-[5px] pt-[2px] leading-[25px]">{children}</T>
  </label>
);

const report = [
  [0, ["Mass properties of lab 3 part 1", 256]],
  [25, ["Configuration: Default", 188]],
  [25, ["Coordinate system: -- default --", 266]],
  null,
  [0, ["Density = 0.00 grams per cubic millimeter", 349]],
  null,
  [0, ["Mass = 0.12 grams", 158]],
  null,
  [0, ["Volume = 123.72 cubic millimeters", 291]],
  null,
  [0, ["Surface area = 496.52  square millimeters", 347]],
  null,
  [0, ["Center of mass: ( millimeters )", 249]],
  [35, ["X = 0.00", 70]],
  [35, ["Y = -3.09", 77]],
  [35, ["Z = 12.33", 79]],
  null,
  [0, ["Principal axes of inertia and principal moments of inertia: ( grams *  square millimeters )", 738]],
  [0, ["Taken at the center of mass.", 235]],
  [40, ["Ix = ( 0.00,  0.01,  1.00)", 183], ["Px = 0.79", 78]],
  [40, ["Iy = ( 0.00, -1.00,  0.01)", 187], ["Py = 19.83", 87]],
  [40, ["Iz = ( 1.00,  0.00,  0.00)", 183], ["Pz = 20.60", 88]],
  null,
  [0, ["Moments of inertia: ( grams *  square millimeters )", 421]],
  [0, ["Taken at the center of mass and aligned with the output coordinate system. (Using positiv", 749]],
  [35, ["Lxx = 20.60", 95], ["Lxy = 0.00", 86], ["Lxz = 0.00", 86]],
  [35, ["Lyx = 0.00", 86], ["Lyy = 19.83", 95], ["Lyz = 0.21", 84]],
  [35, ["Lzx = 0.00", 86], ["Lzy = 0.21", 84], ["Lzz = 0.79", 86]],
  null,
  [0, ["Moments of inertia: ( grams *  square millimeters )", 421]],
  [0, ["Taken at the output coordinate system. (Using positive tensor notation.)", 599]],
  [35, ["Ixx = 40.59", 91], ["Ixy = 0.00", 82], ["Ixz = 0.00", 82]],
  [35, ["Iyx = 0.00", 82], ["Iyy = 38.64", 92], ["Iyz = -4.50", 90]],
  [35, ["Izx = 0.00", 82], ["Izy = -4.50", 90], ["Izz = 1.97", 81]],
];
const PL = { 0: "pl-px", 25: "pl-[26px]", 35: "pl-[36px]", 40: "pl-[41px]" };

function Dialog() {
  return (
    <div className="absolute top-[33px] left-[84px] flex h-[1422px] w-[866px] flex-col overflow-visible rounded-[14px] bg-[#f0f0f0] text-[18px] leading-[25px] text-black shadow-[0_0_0_1.5px_rgba(120,120,120,0.75),0_32px_64px_rgba(0,0,0,0.42),0_4px_40px_rgba(0,0,0,0.25)]">
      <div className="flex h-[50px] shrink-0 items-center rounded-t-[14px] bg-[#eef3fb] pl-[12px]">
        <ScalesBold />
        <T w={148} className="ml-[10px] pt-[1px] text-[20px]">Mass Properties</T>
        <div className="ml-auto h-[1.500px] w-[15px] bg-[#111]" />
        <div className="ml-[66px] h-[15px] w-[15px] rounded-[2px] border-[1.500px] border-[#c3c7ce]" />
        <S w={17} h={17} className="mr-[32px] ml-[65px]">
          <path d="M1 1L16 16M16 1L1 16" stroke="#1a1a1a" strokeWidth="1.600" />
        </S>
      </div>
      <div className="mt-[9px] flex items-start">
        <div className="mt-[14px] ml-[27px] w-[56px]">
          <Part w={27} h={29} />
        </div>
        <div className="h-[119px] w-[556px] shrink-0 border-2 border-[#52ade4] bg-[#cfe4f8] pt-[1px] pl-[2px]">
          <T w={96}>lab 3 part 1</T>
        </div>
        <Btn className="mt-[39px] ml-[61px] w-[136px]" w={79}><U>O</U>ptions...</Btn>
      </div>
      <div className="mt-[11px] ml-[84px] flex">
        <Btn className="w-[353px]" w={225}>Override Mass Properties...</Btn>
        <Btn className="ml-[34px] w-[166px]" w={96}><U>R</U>ecalculate</Btn>
      </div>
      <Check on className="mt-[21px]" w={299}>Include <U>h</U>idden bodies/components</Check>
      <Check className="mt-[21px]" w={251}>Create Center of Mass feature</Check>
      <Check className="mt-[23px]" w={186}>Show weld bead mass</Check>
      <div className="mt-[13px] ml-[122px] flex h-[33px] items-center">
        <T w={303} className="pt-[5px]">Report coordinate values relative to:</T>
        <div className="ml-[7px] flex h-[33px] w-[399px] items-center justify-between rounded-[2px] border border-[#868686] bg-white pr-[9px] pl-[4px]">
          <T w={100}>-- default --</T>
          <S w={13} h={8}>
            <path d="M1 1L6.500 7L12 1" stroke="#666" strokeWidth="1.300" />
          </S>
        </div>
      </div>
      <div className="mt-[11px] ml-[80px] flex h-[902px] w-[753px] shrink-0 flex-col border-t-2 border-r border-b-2 border-l-2 border-t-[#7a7a7a] border-r-white border-b-white border-l-[#7a7a7a]">
        <div className="h-[869px] shrink-0 overflow-hidden border-b border-[#fbfbfb] pt-[2px]">
          {report.map((r, k) =>
            r ? (
              <div key={k} className={"flex h-[25px] " + PL[r[0]]}>
                {r.slice(1).map(([t, w], m) => (
                  <div key={m} className={r.length > 2 ? (r[0] === 40 && m === 0 ? "w-[240px] shrink-0" : "w-[245px] shrink-0") : "shrink-0"}>
                    <T w={w}>{t}</T>
                  </div>
                ))}
              </div>
            ) : (
              <div key={k} className="h-[25px]" />
            )
          )}
        </div>
        <div className="mt-[12px] ml-[30px] h-[7px] w-[570px] rounded-[3px] bg-[#868686]" />
      </div>
      <div className="mt-[14px] ml-[84px] flex">
        <Btn className="w-[163px]" w={40}>Help</Btn>
        <Btn className="ml-[106px] w-[169px]" w={52}><U>P</U>rint...</Btn>
        <Btn className="ml-[87px] w-[224px]" w={154}><U>C</U>opy to Clipboard</Btn>
      </div>
    </div>
  );
}

function StatusBar() {
  return (
    <div className="flex h-[30px] shrink-0 items-center border-t border-[#7f7f7f] bg-[#e6e6e6] text-[22px] leading-[28px] text-black">
      <T w={520} className="pl-[1px]">SOLIDWORKS Student Edition - Academic Use Only</T>
      <S w={32} h={27} className="ml-auto">
        <path d="M1 27V24H6V27ZM8 27V23H13V27ZM15 27V20H20V27ZM22 27V14H27V27Z" fill="#1f5f80" />
        <path d="M2 21Q22 22 21 8H17L24 1L31 8H27Q28 24 2 21Z" fill="#333" />
        <path d="M9 1L17 16H1Z" fill="#fbd012" stroke="#8a5a00" strokeWidth="1.200" />
        <path d="M9 5V11M9 12.500V14.500" stroke="#111" strokeWidth="2" />
      </S>
      <T w={197} className="ml-[56px]">Simplified Interface</T>
      <T w={71} className="ml-[29px]">MMGS</T>
      <S w={6} h={3} className="ml-[22px]">
        <path d="M0 3H6L3 0Z" fill="#444" />
      </S>
      <S w={30} h={26} className="mr-[2px] ml-[27px]">
        <path d="M1 2L12 1L29 13V18L18 26L1 11Z" fill="#f2f2f2" stroke="#444" strokeWidth="1.500" />
        <circle cx="7" cy="6" r="2.500" stroke="#444" strokeWidth="1.300" />
        <path d="M11 12L15 6M14 15L19 8M17 18L22 11" stroke="#555" strokeWidth="1.500" />
      </S>
    </div>
  );
}

export default function App() {
  return (
    <div className="relative flex h-[1836px] w-[3070px] flex-col overflow-hidden bg-[#c4c7d2] font-['Open_Sans','Noto_Sans',sans-serif]">
      <Defs />
      <Header />
      <div className="flex h-[142px] shrink-0 border-b-2 border-[#858585] bg-[#f7f7f7]">
        <div className="flex w-[961px] shrink-0 items-start pt-[8px]">
          <div className="ml-[10px] flex w-[58px] flex-col items-start text-[18px] leading-[25px]">
            <div className="ml-[9px]">{icons.sketch}</div>
            <T w={57} className="mt-[3px]">Sketch</T>
          </div>
          <div className="mt-[39px] ml-[9px] text-[18px] leading-[25px]">L</div>
          <div className={"mt-[39px] mr-[3px] ml-auto text-[18px] leading-[25px] " + GRAY}>n</div>
        </div>
        {ribbon.map((d, k) =>
          d ? <RibbonItem key={k} d={d} /> : <div key={k} className="mt-[1px] h-[138px] w-px shrink-0 bg-[#c3c3c3]" />
        )}
        <S w={20} h={12} className="mt-[112px] mr-[12px] ml-auto">
          <path d="M2 10L10 2L18 10" stroke="#3f3f3f" strokeWidth="3.200" />
        </S>
      </div>
      <div className="flex min-h-0 flex-1">
        <LeftPanel />
        <div className="relative flex flex-1 flex-col bg-[#c4c7d2]">
          <Model />
          <div className="relative">
            <HudBar />
          </div>
          <TaskPane />
        </div>
      </div>
      <StatusBar />
      <Dialog />
    </div>
  );
}
